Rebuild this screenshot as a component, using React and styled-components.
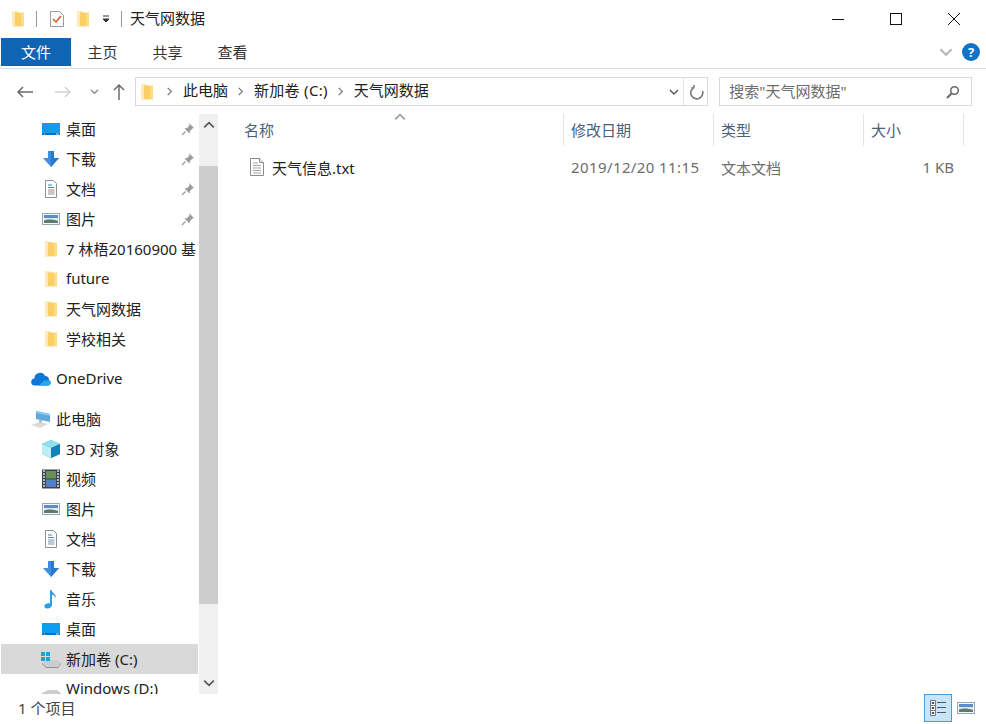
import * as React from "react";
import styled, { createGlobalStyle } from "styled-components";

const GlobalStyle = createGlobalStyle`
  html, body { margin: 0; padding: 0; background: #fff; }
  body {
    font-family: "Noto Sans", "Noto Sans CJK SC", sans-serif;
    font-size: 15px;
    color: #1e1e1e;
  }
`;

const FolderIcon = ({ size = 16 }) => (
  <svg width={size} height={size} viewBox="0 0 16 16">
    <path d="M2 0.500h6l1 1h5v14H2z" fill="#fbdc8a" />
    <path d="M2 0.500h3v15H2z" fill="#fdeab8" />
    <path d="M5 2h6v13H5z" fill="#f9cf66" />
    <path d="M11 2h3v13h-3z" fill="#fbdc8a" />
  </svg>
);

const DesktopIcon = () => (
  <svg width="20" height="16" viewBox="0 0 20 16">
    <rect x="1" y="2" width="18" height="12" fill="#0e9cf0" />
    <path d="M1 12h18v2H1z" fill="#0b6fb8" />
    <path d="M3 13h1M15 13h3" stroke="#cfeaff" />
  </svg>
);

const DownloadIcon = () => (
  <svg width="20" height="18" viewBox="0 0 20 18">
    <path d="M7 1h6v7h5l-8 9-8-9h5z" fill="#3f8fdf" />
    <path d="M10 1h3v7h5l-8 9z" fill="#2c78c8" />
  </svg>
);

const DocIcon = () => (
  <svg width="18" height="18" viewBox="0 0 18 18">
    <path d="M3.500.5h8l3 3v14h-11z" fill="#fff" stroke="#8a929b" />
    <path d="M6 5h4M6 7.500h6" stroke="#2f8fd0" strokeWidth="1.200" />
    <path d="M6 10h6.500M6 12h6.500M6 14h6.500" stroke="#8b8f94" />
  </svg>
);

const PictureIcon = () => (
  <svg width="20" height="16" viewBox="0 0 20 16">
    <rect x="1.500" y="2.500" width="17" height="11" fill="#f5f7fa" stroke="#9aa6b2" />
    <path d="M3 4h14v3H3z" fill="#5b8ec8" />
    <path d="M3 7h14v5H3z" fill="#dfe8f0" />
    <path d="M3 9.500c4-1.500 9-1 14 .5v2H3z" fill="#5a7a6a" />
  </svg>
);

const PinIcon = () => (
  <svg width="14" height="14" viewBox="0 0 14 14">
    <path d="M8 1l5 5-1.500.5-2.500 2.500-.5 2.500-5-5 2.500-.5 2.500-2.500z" fill="#9b9b9b" />
    <path d="M4.500 9.500L1 13" stroke="#9b9b9b" strokeWidth="1.300" />
  </svg>
);

const OneDriveIcon = () => (
  <svg width="21" height="14" viewBox="0 0 21 14">
    <path d="M4 13.500a3.500 3.500 0 01-.5-7A5.500 5.500 0 0114 4a4 4 0 014 4 3 3 0 01-.5 5.500z" fill="#0f78d4" />
    <path d="M8 13.500l5-5 5.500-.3a3 3 0 01-1 5.300z" fill="#28a8ea" />
  </svg>
);

const ComputerIcon = () => (
  <svg width="22" height="20" viewBox="0 0 22 20">
    <path d="M6 2l14 3v8L6 10z" fill="#5ea9dc" />
    <path d="M6 2l14 3v2L6 4z" fill="#8cc8ee" />
    <path d="M1 16l9-3 8 2-8 4z" fill="#d8dadc" />
    <path d="M9 10.500v3l3 .5v-3z" fill="#b8bcc0" />
  </svg>
);

const CubeIcon = () => (
  <svg width="20" height="20" viewBox="0 0 20 20">
    <path d="M10 1l9 4v10l-9 4-9-4V5z" fill="#2aa6d8" />
    <path d="M10 1l9 4-9 4-9-4z" fill="#8fe0ec" />
    <path d="M1 5l9 4v10l-9-4z" fill="#bdeef2" />
    <path d="M10 9l9-4v10l-9 4z" fill="#1780b8" />
  </svg>
);

const VideoIcon = () => (
  <svg width="18" height="20" viewBox="0 0 18 20">
    <rect width="18" height="19" y="0.500" fill="#3a4350" />
    <rect x="4" y="2" width="10" height="7.500" fill="#67924f" />
    <rect x="4" y="10.500" width="10" height="7.500" fill="#4f7fcb" />
    <path d="M1 2h2M1 5h2M1 8h2M1 11h2M1 14h2M1 17h2M15 2h2M15 5h2M15 8h2M15 11h2M15 14h2M15 17h2" stroke="#d7dde2" strokeWidth="1.400" />
  </svg>
);

const MusicIcon = () => (
  <svg width="16" height="20" viewBox="0 0 16 20">
    <path d="M7 1h1.500c.5 3 5 4 4.500 8-1-2-2.500-3-4-3.300V16c0 2-2 3.500-4.500 3.500S1 18.300 1.500 16.500 5 13.800 7 14.500z" fill="#2d9fe0" />
  </svg>
);

const DriveIcon = ({ windows }) => (
  <svg width="22" height="20" viewBox="0 0 22 20">
    <path d="M2 14l6-3h9l4 3-3 4H6z" fill="#c9cdd1" />
    <path d="M2 14l4 4h12l3-4v1l-3 4H6l-4-4z" fill="#8d9296" />
    {windows && (
      <path d="M1 3h4v4H1zM6 3h4v4H6zM1 8h4v4H1zM6 8h4v4H6z" fill="#19a3dc" />
    )}
  </svg>
);

const TextFileIcon = () => (
  <svg width="16" height="20" viewBox="0 0 16 20">
    <path d="M1.500 1.500h9l4 4v13h-13z" fill="#fff" stroke="#8a8a8a" />
    <path d="M10.500 1.500v4h4" fill="#eee" stroke="#8a8a8a" />
    <path d="M4 6h5M4 8.500h8M4 11h8M4 13.500h8M4 16h8" stroke="#a4a4a4" />
  </svg>
);

const Chevron = ({ dir = "right", color = "#707070", size = 10 }) => {
  const paths = {
    right: "M3 1l4 4-4 4",
    down: "M1 3l4 4 4-4",
    up: "M1 7l4-4 4 4",
  };
  return (
    <svg width={size} height={size} viewBox="0 0 10 10">
      <path d={paths[dir]} fill="none" stroke={color} strokeWidth="1.400" />
    </svg>
  );
};

const quickAccess = [
  { label: "桌面", icon: <DesktopIcon />, pinned: true },
  { label: "下载", icon: <DownloadIcon />, pinned: true },
  { label: "文档", icon: <DocIcon />, pinned: true },
  { label: "图片", icon: <PictureIcon />, pinned: true },
  { label: "7 林梧20160900 基", icon: <FolderIcon /> },
  { label: "future", icon: <FolderIcon /> },
  { label: "天气网数据", icon: <FolderIcon /> },
  { label: "学校相关", icon: <FolderIcon /> },
];

const thisPc = [
  { label: "3D 对象", icon: <CubeIcon /> },
  { label: "视频", icon: <VideoIcon /> },
  { label: "图片", icon: <PictureIcon /> },
  { label: "文档", icon: <DocIcon /> },
  { label: "下载", icon: <DownloadIcon /> },
  { label: "音乐", icon: <MusicIcon /> },
  { label: "桌面", icon: <DesktopIcon /> },
  { label: "新加卷 (C:)", icon: <DriveIcon windows />, selected: true },
  { label: "Windows (D:)", icon: <DriveIcon /> },
];

const NavRow = ({ item }) => (
  <Row $selected={item.selected}>
    <RowIcon>{item.icon}</RowIcon>
    <RowLabel>{item.label}</RowLabel>
    {item.pinned && (
      <Pin>
        <PinIcon />
      </Pin>
    )}
  </Row>
);

export default function App() {
  return (
    <Window>
      <GlobalStyle />
      <TitleBar>
        <QuickTools>
          <FolderIcon />
          <TitleSep />
          <svg width="16" height="18" viewBox="0 0 16 18">
            <path d="M1.500 1.500h9l4 4v11h-13z" fill="#fff" stroke="#9a9a9a" />
            <path d="M4 9l3 3 5-6" fill="none" stroke="#d9542b" strokeWidth="1.500" />
          </svg>
          <FolderIcon />
          <svg width="10" height="10" viewBox="0 0 10 10">
            <path d="M2 2h6M2 5h6l-3 3z" stroke="#333" fill="#333" />
          </svg>
          <TitleSep />
        </QuickTools>
        <WindowTitle>天气网数据</WindowTitle>
        <WindowControls>
          <WindowButton>
            <svg width="12" height="12" viewBox="0 0 12 12">
              <path d="M0 6.500h12" stroke="#111" />
            </svg>
          </WindowButton>
          <WindowButton>
            <svg width="12" height="12" viewBox="0 0 12 12">
              <rect x="0.500" y="0.500" width="11" height="11" fill="none" stroke="#111" />
            </svg>
          </WindowButton>
          <WindowButton>
            <svg width="12" height="12" viewBox="0 0 12 12">
              <path d="M0 0l12 12M12 0L0 12" stroke="#111" />
            </svg>
          </WindowButton>
        </WindowControls>
      </TitleBar>

      <Ribbon>
        <FileTab>文件</FileTab>
        <Tab>主页</Tab>
        <Tab>共享</Tab>
        <Tab>查看</Tab>
        <RibbonRight>
          <Chevron dir="down" color="#b5b5b5" size={14} />
          <HelpBadge>?</HelpBadge>
        </RibbonRight>
      </Ribbon>

      <AddressRow>
        <NavButtons>
          <NavButton $width={36}>
            <svg width="18" height="14" viewBox="0 0 18 14">
              <path d="M17 7H2M7 2L2 7l5 5" fill="none" stroke="#6b6b6b" strokeWidth="1.500" />
            </svg>
          </NavButton>
          <NavButton $width={40}>
            <svg width="18" height="14" viewBox="0 0 18 14">
              <path d="M1 7h15M11 2l5 5-5 5" fill="none" stroke="#d4d4d4" strokeWidth="1.500" />
            </svg>
          </NavButton>
          <NavButton $width={22}>
            <Chevron dir="down" color="#8a8a8a" size={9} />
          </NavButton>
          <NavButton $width={28}>
            <svg width="14" height="18" viewBox="0 0 14 18">
              <path d="M7 17V2M2 7l5-5 5 5" fill="none" stroke="#6b6b6b" strokeWidth="1.500" />
            </svg>
          </NavButton>
        </NavButtons>
        <AddressBox>
          <FolderIcon />
          <Crumbs>
            <Chevron color="#7a7a7a" size={9} />
            <Crumb>此电脑</Crumb>
            <Chevron color="#7a7a7a" size={9} />
            <Crumb $spacing={0.3}>新加卷 (C:)</Crumb>
            <Chevron color="#7a7a7a" size={9} />
            <Crumb>天气网数据</Crumb>
          </Crumbs>
          <AddressEnd>
            <Chevron dir="down" color="#555" size={10} />
            <AddressDivider />
            <svg width="16" height="16" viewBox="0 0 16 16">
              <path d="M5 2.500a6 6 0 108.500 3.500M5 2.500V0M5 2.500L2.500 3" transform="translate(0 1)" fill="none" stroke="#777" strokeWidth="1.600" />
            </svg>
          </AddressEnd>
        </AddressBox>
        <SearchBox>
          <SearchText>搜索"天气网数据"</SearchText>
          <svg width="14" height="14" viewBox="0 0 14 14">
            <circle cx="8.500" cy="5.500" r="3.800" fill="none" stroke="#666" strokeWidth="1.500" />
            <path d="M5.500 8.500L1 13" stroke="#666" strokeWidth="2" />
          </svg>
        </SearchBox>
      </AddressRow>

      <Main>
        <Sidebar>
          <NavList>
            <NavGroup>
              {quickAccess.map((item) => (
                <NavRow key={item.label} item={item} />
              ))}
            </NavGroup>
            <RootRow>
              <RootIcon>
                <OneDriveIcon />
              </RootIcon>
              <RowLabel>OneDrive</RowLabel>
            </RootRow>
            <RootRow>
              <RootIcon>
                <ComputerIcon />
              </RootIcon>
              <RowLabel>此电脑</RowLabel>
            </RootRow>
            <NavGroup>
              {thisPc.map((item) => (
                <NavRow key={item.label} item={item} />
              ))}
            </NavGroup>
          </NavList>
          <Scrollbar>
            <ScrollButton $top={5}>
              <Chevron dir="up" color="#555" size={12} />
            </ScrollButton>
            <ScrollGap />
            <ScrollThumb />
            <ScrollTrack />
            <ScrollButton $top={2}>
              <Chevron dir="down" color="#555" size={12} />
            </ScrollButton>
          </Scrollbar>
        </Sidebar>

        <Content>
          <HeaderRow>
            <SortCaret>
              <Chevron dir="up" color="#a0a0a0" size={12} />
            </SortCaret>
            <HeaderCell $width={327}>名称</HeaderCell>
            <HeaderCell $width={150}>修改日期</HeaderCell>
            <HeaderCell $width={150}>类型</HeaderCell>
            <HeaderCell $width={100}>大小</HeaderCell>
          </HeaderRow>
          <FileRow>
            <NameCell>
              <TextFileIcon />
              <FileName>天气信息.txt</FileName>
            </NameCell>
            <MetaCell $width={150} $spacing={0.4}>2019/12/20 11:15</MetaCell>
            <MetaCell $width={150}>文本文档</MetaCell>
            <SizeCell>1 KB</SizeCell>
          </FileRow>
        </Content>
      </Main>

      <StatusBar>
        <StatusText>1 个项目</StatusText>
        <ViewButtons>
          <ViewButton $active>
            <svg width="20" height="20" viewBox="0 0 20 20">
              <path d="M2.500 2.500h5v5h-5zM2.500 7.500h5v5h-5zM2.500 12.500h5v5h-5z" fill="#fff" stroke="#777" />
              <path d="M3.800 4h2.400v2H3.800zM3.800 9h2.400v2H3.800zM3.800 14h2.400v2H3.800z" fill="#555" />
              <path d="M9 4.500h9M9 9.500h9M9 14.500h9" stroke="#555" />
            </svg>
          </ViewButton>
          <ViewButton>
            <PictureIcon />
          </ViewButton>
        </ViewButtons>
      </StatusBar>
    </Window>
  );
}

const Window = styled.div`
  width: 986px;
  height: 724px;
  display: flex;
  flex-direction: column;
  overflow: hidden;
  background: #fff;
`;

const TitleBar = styled.div`
  height: 38px;
  display: flex;
  align-items: center;
  padding-left: 10px;
`;

const QuickTools = styled.div`
  display: flex;
  align-items: center;
  gap: 10px;
`;

const TitleSep = styled.span`
  width: 1px;
  height: 16px;
  margin-right: 2px;
  background: #9a9a9a;
`;

const WindowTitle = styled.div`
  margin-left: 6px;
  padding-bottom: 3px;
  font-size: 15px;
  color: #222;
`;

const WindowControls = styled.div`
  margin-left: auto;
  padding-right: 3px;
  display: flex;
`;

const WindowButton = styled.div`
  width: 58px;
  height: 38px;
  display: flex;
  align-items: center;
  justify-content: center;
`;

const Ribbon = styled.div`
  height: 31px;
  display: flex;
  box-sizing: border-box;
  padding: 0 6px 3px 1px;
  border-bottom: 1px solid #dadbdc;
`;

const FileTab = styled.div`
  width: 70px;
  height: 28px;
  box-sizing: border-box;
  padding-bottom: 2px;
  display: flex;
  align-items: center;
  justify-content: center;
  background: #0f64b4;
  color: #fff;
  font-size: 15px;
`;

const Tab = styled.div`
  width: 65px;
  height: 28px;
  box-sizing: border-box;
  padding: 0 2px 2px 0;
  display: flex;
  align-items: center;
  justify-content: center;
  font-size: 15px;
  color: #333;
`;

const RibbonRight = styled.div`
  margin-left: auto;
  height: 28px;
  display: flex;
  align-items: center;
  gap: 9px;
`;

const HelpBadge = styled.div`
  width: 18px;
  height: 18px;
  border-radius: 50%;
  display: flex;
  align-items: center;
  justify-content: center;
  background: #1173c7;
  color: #fff;
  font-size: 13px;
  font-weight: 700;
`;

const AddressRow = styled.div`
  height: 45px;
  display: flex;
  align-items: center;
  box-sizing: border-box;
  padding: 0 14px 0 7px;
`;

const NavButtons = styled.div`
  display: flex;
  align-items: center;
  margin-right: 2px;
`;

const NavButton = styled.div`
  width: ${(p) => p.$width}px;
  display: flex;
  align-items: center;
  justify-content: center;
`;

const AddressBox = styled.div`
  width: 574px;
  height: 29px;
  box-sizing: border-box;
  display: flex;
  align-items: center;
  padding-left: 3px;
  border: 1px solid #d9d9d9;
`;

const Crumbs = styled.div`
  display: flex;
  align-items: center;
  margin-left: 10px;
  gap: 8px;
`;

const Crumb = styled.span`
  margin-left: 1px;
  padding-bottom: 4px;
  font-size: 15px;
  letter-spacing: ${(p) => p.$spacing || 0}px;
  color: #222;
`;

const AddressEnd = styled.div`
  margin-left: auto;
  height: 100%;
  display: flex;
  align-items: center;
  padding-right: 2px;
  gap: 4px;
`;

const AddressDivider = styled.span`
  width: 1px;
  height: 100%;
  background: #e2e2e2;
  margin-right: 1px;
`;

const SearchBox = styled.div`
  width: 253px;
  height: 29px;
  margin-left: 11px;
  box-sizing: border-box;
  display: flex;
  align-items: center;
  justify-content: space-between;
  padding: 0 11px 0 9px;
  border: 1px solid #d9d9d9;
`;

const SearchText = styled.span`
  padding-bottom: 2px;
  font-size: 15px;
  color: #6d6d6d;
`;

const Main = styled.div`
  flex: 1;
  min-height: 0;
  display: flex;
`;

const Sidebar = styled.div`
  width: 218px;
  display: flex;
  overflow: hidden;
`;

const NavList = styled.div`
  width: 197px;
  margin-left: 1px;
  margin-right: 1px;
  overflow: hidden;
`;

const NavGroup = styled.div`
  display: flex;
  flex-direction: column;
`;

const Row = styled.div`
  position: relative;
  height: 30px;
  display: flex;
  align-items: center;
  padding-left: 39px;
  white-space: nowrap;
  overflow: hidden;
  background: ${(p) => (p.$selected ? "#d9d9d9" : "transparent")};
`;

const RootRow = styled.div`
  height: 30px;
  margin-top: 10px;
  display: flex;
  align-items: center;
  padding-left: 29px;
  white-space: nowrap;
`;

const RowIcon = styled.span`
  width: 22px;
  margin-right: 4px;
  display: flex;
  align-items: center;
  justify-content: center;
  flex: none;
`;

const RootIcon = styled(RowIcon)`
  margin-right: 4px;
`;

const RowLabel = styled.span`
  padding-bottom: 2px;
  font-size: 15px;
  color: #222;
`;

const Pin = styled.span`
  position: absolute;
  right: 3px;
  top: 8px;
  display: flex;
`;

const Scrollbar = styled.div`
  width: 19px;
  display: flex;
  flex-direction: column;
  background: #f0f0f0;
`;

const ScrollButton = styled.div`
  height: 19px;
  box-sizing: border-box;
  padding-top: ${(p) => p.$top}px;
  display: flex;
  align-items: flex-start;
  justify-content: center;
`;

const ScrollGap = styled.div`
  height: 33px;
`;

const ScrollThumb = styled.div`
  height: 438px;
  background: #cdcdcd;
`;

const ScrollTrack = styled.div`
  flex: 1;
`;

const Content = styled.div`
  flex: 1;
  padding-left: 19px;
`;

const HeaderRow = styled.div`
  position: relative;
  height: 32px;
  display: flex;
  margin-bottom: 6px;
`;

const SortCaret = styled.span`
  position: absolute;
  left: 157px;
  top: -3px;
  display: flex;
`;

const HeaderCell = styled.div`
  width: ${(p) => p.$width}px;
  box-sizing: border-box;
  display: flex;
  align-items: center;
  padding: 0 0 2px 7px;
  border-right: 1px solid #e5e5e5;
  font-size: 15px;
  color: #4c607a;
`;

const FileRow = styled.div`
  height: 30px;
  display: flex;
  align-items: center;
`;

const NameCell = styled.div`
  width: 327px;
  box-sizing: border-box;
  padding-left: 12px;
  display: flex;
  align-items: center;
  gap: 7px;
`;

const FileName = styled.span`
  font-size: 15px;
  color: #222;
`;

const MetaCell = styled.div`
  width: ${(p) => p.$width}px;
  box-sizing: border-box;
  padding-left: 7px;
  font-size: 15px;
  letter-spacing: ${(p) => p.$spacing || 0}px;
  color: #6d6d6d;
`;

const SizeCell = styled.div`
  width: 90px;
  text-align: right;
  font-size: 15px;
  color: #6d6d6d;
`;

const StatusBar = styled.div`
  height: 30px;
  flex: none;
  display: flex;
  align-items: center;
  padding: 0 6px 2px 18px;
  box-sizing: border-box;
`;

const StatusText = styled.span`
  padding-bottom: 2px;
  font-size: 15px;
  color: #444;
`;

const ViewButtons = styled.div`
  margin-left: auto;
  display: flex;
  align-items: center;
`;

const ViewButton = styled.div`
  width: 28px;
  height: 28px;
  box-sizing: border-box;
  display: flex;
  align-items: center;
  justify-content: center;
  border: 1px solid ${(p) => (p.$active ? "#4f9fce" : "transparent")};
  background: ${(p) => (p.$active ? "#c6e4fa" : "transparent")};
`;
